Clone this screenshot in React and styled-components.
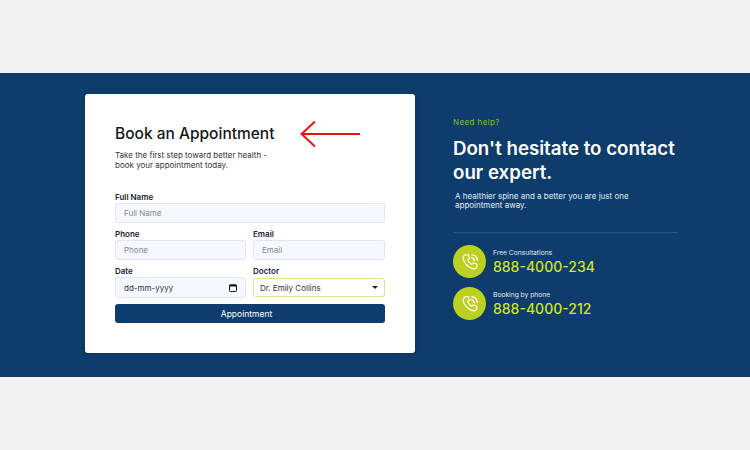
import styled, { createGlobalStyle } from "styled-components";

const GlobalStyle = createGlobalStyle`
    * {
        box-sizing: border-box;
    }

    body {
        margin: 0;
        background-color: #f2f2f2;
        font-family: "Inter", "Liberation Sans", sans-serif;
    }
`;

const PhoneIcon = () => (
    <svg width="18" height="18" viewBox="0 0 24 24" fill="none" stroke="white" strokeWidth="1.6" strokeLinecap="round" strokeLinejoin="round">
        <path d="M6.2 2.6 8.4 2c.5-.1 1 .1 1.2.6l1.5 3.6c.2.4.1.9-.3 1.2L8.900 8.800c1 2.500 3 4.900 5.700 6.400l1.600-1.700c.3-.3.800-.4 1.200-.2l3.500 1.700c.5.200.7.700.6 1.200l-.7 2.300c-.5 1.700-2.100 2.900-3.900 2.600C9.800 20 3.500 13.300 3 7c-.2-2 1.300-3.900 3.200-4.400Z" />
        <path d="M13.500 6.200c2.200.3 3.900 2 4.300 4.200" />
        <path d="M14 2.200c4 .4 7.300 3.600 7.800 7.700" />
    </svg>
);

const ArrowIcon = () => (
    <svg width="62" height="28" viewBox="0 0 62 28" fill="none" stroke="#f01010" strokeWidth="2">
        <path d="M61 14H3" />
        <path d="M16 1.500 2.500 14 16 26.500" />
    </svg>
);

const CalendarIcon = () => (
    <svg width="8" height="8" viewBox="0 0 8 8" fill="none">
        <rect x="0.500" y="0.800" width="7" height="6.700" rx="0.800" stroke="#111" strokeWidth="1" />
        <rect x="0.500" y="0.800" width="7" height="1.700" fill="#111" />
    </svg>
);

export default function App() {
    return (
        <>
            <GlobalStyle />
            <Page>
                <Band>
                    <Card>
                        <ArrowWrap>
                            <ArrowIcon />
                        </ArrowWrap>
                        <Title>Book an Appointment</Title>
                        <Subtitle>
                            Take the first step toward better health -<br />
                            book your appointment today.
                        </Subtitle>
                        <Form>
                            <Field>
                                <Label>Full Name</Label>
                                <Input placeholder="Full Name" />
                            </Field>
                            <FieldRow>
                                <Field>
                                    <Label>Phone</Label>
                                    <Input placeholder="Phone" />
                                </Field>
                                <Field>
                                    <Label>Email</Label>
                                    <Input placeholder="Email" />
                                </Field>
                            </FieldRow>
                            <FieldRow>
                                <Field>
                                    <Label>Date</Label>
                                    <DateBox>
                                        dd-mm-yyyy
                                        <CalendarIcon />
                                    </DateBox>
                                </Field>
                                <Field>
                                    <Label>Doctor</Label>
                                    <DoctorBox>
                                        Dr. Emily Collins
                                        <Caret />
                                    </DoctorBox>
                                </Field>
                            </FieldRow>
                            <SubmitButton type="button">Appointment</SubmitButton>
                        </Form>
                    </Card>
                    <Help>
                        <Eyebrow>Need help?</Eyebrow>
                        <Headline>Don't hesitate to contact<br />our expert.</Headline>
                        <HelpText>
                            A healthier spine and a better you are just one<br />
                            appointment away.
                        </HelpText>
                        <Divider />
                        <Contacts>
                            <Contact>
                                <IconCircle><PhoneIcon /></IconCircle>
                                <div>
                                    <ContactLabel>Free Consultations</ContactLabel>
                                    <ContactNumber>888-4000-234</ContactNumber>
                                </div>
                            </Contact>
                            <Contact>
                                <IconCircle><PhoneIcon /></IconCircle>
                                <div>
                                    <ContactLabel>Booking by phone</ContactLabel>
                                    <ContactNumber>888-4000-212</ContactNumber>
                                </div>
                            </Contact>
                        </Contacts>
                    </Help>
                </Band>
            </Page>
        </>
    );
}

const Page = styled.main`
    height: 450px;
    padding-top: 73px;
    overflow: hidden;
`;

const Band = styled.section`
    display: flex;
    align-items: flex-start;
    gap: 38px;
    height: 304px;
    padding: 21px 0 0 85px;
    background-color: #0d3c6d;
`;

const Card = styled.div`
    position: relative;
    width: 330px;
    height: 259px;
    padding: 30px 30px 0;
    background-color: white;
    border-radius: 3px;
    box-shadow: 0 1px 4px rgba(0, 0, 0, 0.2);
`;

const ArrowWrap = styled.div`
    position: absolute;
    left: 214px;
    top: 26px;
    line-height: 0;
`;

const Title = styled.h2`
    margin: 0;
    font-size: 15.500px;
    line-height: 19px;
    font-weight: 500;
    color: #16161a;
`;

const Subtitle = styled.p`
    margin: 8px 0 0;
    font-size: 8px;
    line-height: 9.500px;
    color: #333;
`;

const Form = styled.form`
    display: flex;
    flex-direction: column;
    margin-top: 22px;
`;

const Field = styled.div`
    display: flex;
    flex-direction: column;
    min-width: 0;
    margin-bottom: 6px;
`;

const FieldRow = styled.div`
    display: grid;
    grid-template-columns: 131px 132px;
    gap: 7px;
`;

const Label = styled.label`
    font-size: 8px;
    line-height: 11px;
    font-weight: 600;
    color: #1c2230;
`;

const Input = styled.input`
    width: 100%;
    height: 20px;
    padding: 0 8px;
    background-color: #f5f8ff;
    border: 1px solid #dfe7f5;
    border-radius: 3px;
    font-family: inherit;
    font-size: 8px;

    &::placeholder {
        color: #858a92;
    }
`;

const DateBox = styled.div`
    display: flex;
    align-items: center;
    justify-content: space-between;
    height: 21px;
    padding: 0 8px;
    background-color: #f5f8ff;
    border: 1px solid #dfe7f5;
    border-radius: 3px;
    font-size: 8px;
    color: #333;
`;

const DoctorBox = styled(DateBox)`
    height: 19px;
    margin-top: 1px;
    padding: 0 6px;
    background-color: white;
    border-color: #d9e68f;
`;

const Caret = styled.span`
    width: 0;
    height: 0;
    border-left: 3.500px solid transparent;
    border-right: 3.500px solid transparent;
    border-top: 3.500px solid #222;
`;

const SubmitButton = styled.button`
    height: 19px;
    padding: 0 7px 0 0;
    background-color: #0d3c6d;
    border: none;
    border-radius: 3px;
    font-family: inherit;
    font-size: 8.500px;
    color: white;
`;

const Help = styled.div`
    width: 225px;
    padding-top: 23px;
`;

const Eyebrow = styled.p`
    margin: 0;
    font-size: 8px;
    line-height: 10px;
    letter-spacing: 0.4px;
    color: #8dbb2c;
`;

const Headline = styled.h1`
    margin: 10px 0 0;
    font-size: 18.700px;
    line-height: 24px;
    font-weight: 600;
    white-space: nowrap;
    color: white;
`;

const HelpText = styled.p`
    margin: 7px 0 0 2px;
    font-size: 8px;
    line-height: 9px;
    color: #e6ebf2;
`;

const Divider = styled.hr`
    height: 1px;
    margin: 22px 0 12px;
    background-color: #2a5685;
    border: none;
`;

const Contacts = styled.div`
    display: flex;
    flex-direction: column;
    gap: 9px;
`;

const Contact = styled.div`
    display: flex;
    align-items: center;
    gap: 7px;
`;

const IconCircle = styled.div`
    display: flex;
    align-items: center;
    justify-content: center;
    width: 33px;
    height: 33px;
    background-color: #bcd11f;
    border-radius: 50%;
`;

const ContactLabel = styled.div`
    margin-top: 1px;
    font-size: 6.700px;
    line-height: 9px;
    color: #e6ebf2;
`;

const ContactNumber = styled.div`
    font-size: 14px;
    line-height: 18px;
    font-weight: 500;
    color: #d3e51c;
`;
